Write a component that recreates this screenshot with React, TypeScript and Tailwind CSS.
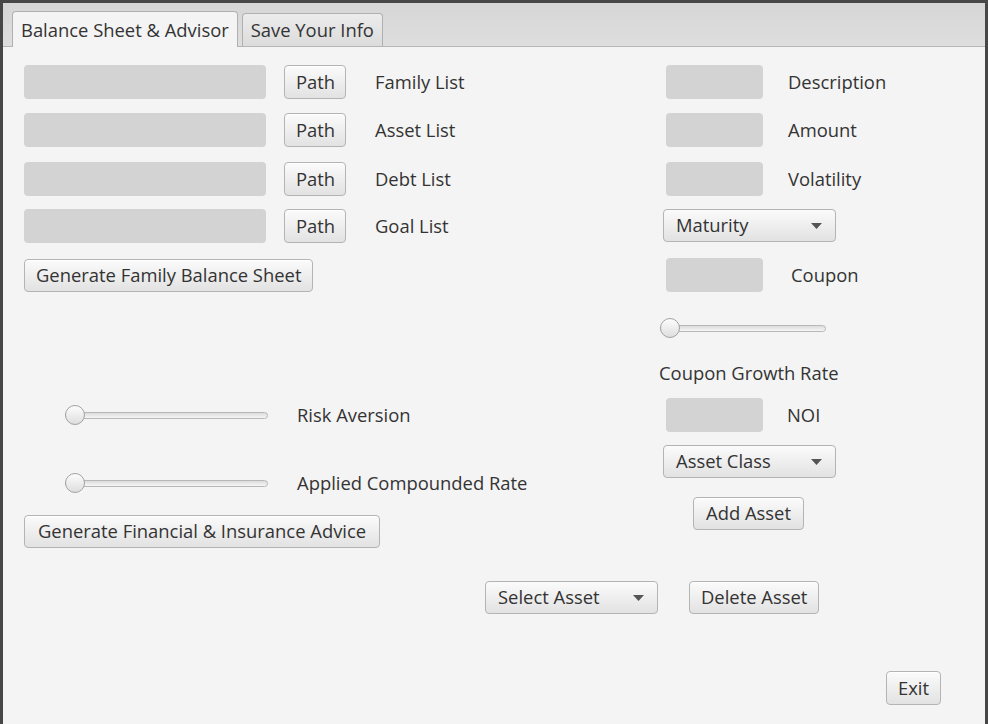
import React from 'react';

const font = { fontFamily: '"Open Sans", "Noto Sans", sans-serif' };

function Field({ w = 'w-[242px]' }: { w?: string }) {
  return <div className={`${w} h-[34px] rounded-[4px] bg-[#d3d3d3]`} />;
}

function Btn({ label, className = 'h-[34px]' }: { label: string; className?: string }) {
  return (
    <button
      className={`px-[11px] rounded-[4px] border border-[#b4b4b4] bg-gradient-to-b from-[#fbfbfb] to-[#e2e2e2] text-[18.4px] text-[#333] leading-none whitespace-nowrap shadow-[inset_0_1px_0_#ffffff] ${className}`}
    >
      {label}
    </button>
  );
}

function Combo({ label, className = '' }: { label: string; className?: string }) {
  return (
    <div
      className={`w-[173px] h-[34px] pl-[12px] pr-[13px] flex items-center justify-between rounded-[4px] border border-[#b4b4b4] bg-gradient-to-b from-[#fbfbfb] to-[#e2e2e2] text-[18.4px] text-[#333] leading-none ${className}`}
    >
      <span>{label}</span>
      <svg width="11" height="6" viewBox="0 0 11 6">
        <path d="M0 0 L11 0 L5.5 6 Z" fill="#555" />
      </svg>
    </div>
  );
}

function Slider({ w }: { w: string }) {
  return (
    <div className={`${w} h-[20px] relative flex items-center`}>
      <div className="w-full h-[7px] rounded-full border border-[#b8b8b8] bg-gradient-to-b from-[#dcdcdc] to-[#f6f6f6]" />
      <div className="absolute left-0 top-0 w-[20px] h-[20px] rounded-full border border-[#a2a2a2] bg-gradient-to-b from-[#fdfdfd] to-[#dedede]" />
    </div>
  );
}

function Label({ text, className = '' }: { text: string; className?: string }) {
  return <span className={`text-[18.4px] leading-[20px] text-[#333] whitespace-nowrap ${className}`}>{text}</span>;
}

export default function App() {
  const lists = ['Family List', 'Asset List', 'Debt List', 'Goal List'];
  const gaps = ['mt-[18px]', 'mt-[14px]', 'mt-[15px]', 'mt-[13px]'];
  return (
    <div style={font} className="w-[988px] h-[724px] bg-[#474747] pt-[3px] px-[3px]">
      <div className="w-full h-full bg-[#f4f4f4] flex flex-col">
        {/* tab header */}
        <div className="h-[44px] shrink-0 bg-gradient-to-b from-[#d6d6d6] to-[#dedede] border-b border-[#b6b6b6] flex items-end pl-[9px] gap-[4px]">
          <div className="h-[36px] -mb-px px-[8px] flex items-center rounded-t-[4px] border border-b-0 border-[#b0b0b0] bg-[#f4f4f4] text-[18.4px] text-[#333] whitespace-nowrap">
            Balance Sheet &amp; Advisor
          </div>
          <div className="h-[33px] px-[8px] flex items-center rounded-t-[4px] border border-b-0 border-[#b0b0b0] bg-gradient-to-b from-[#ececec] to-[#dcdcdc] text-[18.4px] text-[#333] whitespace-nowrap">
            Save Your Info
          </div>
        </div>

        {/* body */}
        <div className="flex pl-[21px]">
          <div className="w-[634px] flex flex-col">
            {lists.map((l, i) => (
              <div key={l} className={`flex items-center ${gaps[i]}`}>
                <Field />
                <Btn label="Path" className="h-[34px] ml-[18px] w-[62px] px-0" />
                <Label text={l} className="ml-[29px]" />
              </div>
            ))}
            <div className="mt-[16px] flex">
              <Btn label="Generate Family Balance Sheet" className="h-[33px]" />
            </div>
            <div className="mt-[113px] h-[20px] flex items-center pl-[41px]">
              <Slider w="w-[203px]" />
              <Label text="Risk Aversion" className="ml-[29px]" />
            </div>
            <div className="mt-[48px] h-[20px] flex items-center pl-[41px]">
              <Slider w="w-[203px]" />
              <Label text="Applied Compounded Rate" className="ml-[29px]" />
            </div>
            <div className="mt-[22px] flex">
              <Btn label="Generate Financial & Insurance Advice" className="h-[33px] px-[13px]" />
            </div>
          </div>

          <div className="flex flex-col">
            <div className="mt-[18px] flex items-center pl-[8px]">
              <Field w="w-[97px]" />
              <Label text="Description" className="ml-[25px]" />
            </div>
            <div className="mt-[14px] flex items-center pl-[8px]">
              <Field w="w-[97px]" />
              <Label text="Amount" className="ml-[25px]" />
            </div>
            <div className="mt-[15px] flex items-center pl-[8px]">
              <Field w="w-[97px]" />
              <Label text="Volatility" className="ml-[25px]" />
            </div>
            <Combo label="Maturity" className="mt-[13px] ml-[5px] !h-[33px]" />
            <div className="mt-[16px] flex items-center pl-[8px]">
              <Field w="w-[97px]" />
              <Label text="Coupon" className="ml-[28px]" />
            </div>
            <div className="mt-[26px] pl-[2px]">
              <Slider w="w-[166px]" />
            </div>
            <Label text="Coupon Growth Rate" className="mt-[25px] ml-[1px]" />
            <div className="mt-[15px] flex items-center pl-[8px]">
              <Field w="w-[97px]" />
              <Label text="NOI" className="ml-[24px]" />
            </div>
            <Combo label="Asset Class" className="mt-[13px] ml-[5px] !h-[33px]" />
            <div className="mt-[19px] pl-[35px] flex">
              <Btn label="Add Asset" className="h-[33px] px-[12px]" />
            </div>
          </div>
        </div>

        <div className="mt-[33px] flex items-center pl-[482px]">
          <Combo label="Select Asset" className="!h-[33px]" />
          <Btn label="Delete Asset" className="ml-[31px] h-[33px]" />
        </div>

        <div className="mt-[57px] flex justify-end pr-[44px]">
          <Btn label="Exit" className="h-[34px] w-[55px] px-0" />
        </div>
      </div>
    </div>
  );
}
